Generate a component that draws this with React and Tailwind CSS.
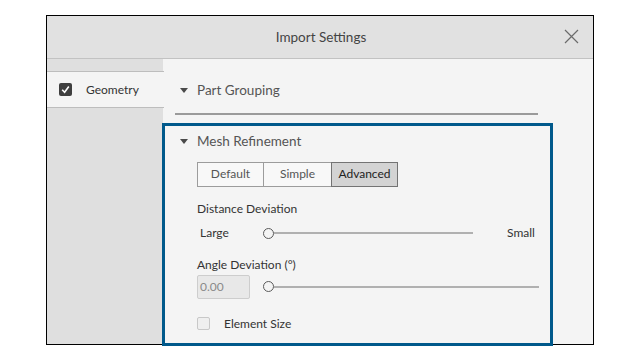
import React from 'react';

const Caret = () => (
  <svg width="8" height="5" viewBox="0 0 8 5" className="shrink-0">
    <path d="M0 0 L8 0 L4 5 Z" fill="#4a4a4a" />
  </svg>
);

const Slider = ({ width }) => (
  <div className="flex items-center">
    <div className="w-[11px] h-[11px] rounded-full border-[1.5px] border-[#5a5a5a] bg-[#f4f4f4] shrink-0" />
    <div className="h-[2px] bg-[#b0b0b0]" style={{ width }} />
  </div>
);

const App = () => {
  return (
    <div className="w-[640px] h-[360px] bg-white pt-[15px] pl-[46px]" style={{ fontFamily: 'Lato, "Noto Sans", sans-serif' }}>
      <div className="w-[548px] h-[330px] border border-black flex flex-col bg-[#f4f4f4]">
        {/* Title bar */}
        <div className="h-[43px] shrink-0 bg-[#e1e1e1] border-b border-[#c2c2c2] flex items-center relative">
          <div className="flex-1 text-center text-[13.5px] text-[#444] pl-[2px]">Import Settings</div>
          <svg width="15" height="15" viewBox="0 0 15 15" className="absolute right-[14px] top-[13px]">
            <path d="M1 1 L14 14 M14 1 L1 14" stroke="#6b6b6b" strokeWidth="1.2" />
          </svg>
        </div>

        <div className="flex flex-1 min-h-0">
          {/* Sidebar */}
          <div className="w-[116px] shrink-0 bg-[#dfdfdf] pt-[12px]">
            <div className="h-[37px] bg-[#f4f4f4] border-y border-[#bdbdbd] flex items-center pl-[12px] mr-[-1px] relative">
              <div className="w-[13px] h-[13px] rounded-[2px] bg-[#3f3f3f] flex items-center justify-center">
                <svg width="9" height="9" viewBox="0 0 9 9">
                  <path d="M1.2 4.8 L3.6 7.2 L7.8 1.5" stroke="#fff" strokeWidth="1.6" fill="none" />
                </svg>
              </div>
              <span className="ml-[14px] text-[12px] text-[#333]">Geometry</span>
            </div>
          </div>

          {/* Content */}
          <div className="flex-1 flex flex-col min-w-0">
            <div className="h-[41px] mt-[11px] flex items-center pl-[17px] gap-[9px]">
              <Caret />
              <span className="text-[13.5px] text-[#555]">Part Grouping</span>
            </div>
            <div className="mt-[2px] ml-[12px] w-[363px] h-[1.5px] bg-[#9a9a9a]" />

            {/* Mesh Refinement highlighted */}
            <div className="mt-[8px] ml-[-1px] w-[391px] flex-1 border-[3px] border-[#00598b] mb-[-2px] relative z-10 pl-[32px] pt-[5px]">
              <div className="h-[21px] flex items-center gap-[9px] ml-[-17px]">
                <Caret />
                <span className="text-[13.5px] text-[#555]">Mesh Refinement</span>
              </div>

              <div className="mt-[10px] flex h-[25px] text-[12px]">
                <div className="w-[67px] border border-[#9c9c9c] bg-[#f8f8f8] flex items-center justify-center text-[#555]">Default</div>
                <div className="w-[67px] border-y border-[#9c9c9c] bg-[#f8f8f8] flex items-center justify-center text-[#555]">Simple</div>
                <div className="w-[67px] border border-[#737373] bg-[#d3d3d3] flex items-center justify-center text-[#222]">Advanced</div>
              </div>

              <div className="mt-[13px] text-[12px] text-[#333] h-[17px] leading-[17px]">Distance Deviation</div>

              <div className="mt-[8px] flex items-center h-[17px] text-[12px] text-[#333]">
                <span className="w-[66px] pl-[3px]">Large</span>
                <Slider width="199px" />
                <span className="ml-[34px]">Small</span>
              </div>

              <div className="mt-[14px] text-[12px] text-[#333] h-[17px] leading-[17px]">Angle Deviation (°)</div>

              <div className="mt-[2px] flex items-center">
                <div className="w-[53px] h-[24px] bg-[#e8e8e8] border border-[#cdcdcd] rounded-[2px] flex items-center pl-[2px] text-[12px] text-[#8a8a8a]">0.00</div>
                <div className="ml-[13px]">
                  <Slider width="265px" />
                </div>
              </div>

              <div className="mt-[16px] flex items-center">
                <div className="w-[13px] h-[13px] border border-[#c8c8c8] rounded-[2px] bg-[#efefef]" />
                <span className="ml-[14px] text-[12px] text-[#333]">Element Size</span>
              </div>
            </div>
          </div>
        </div>
      </div>
    </div>
  );
};

export default App;
